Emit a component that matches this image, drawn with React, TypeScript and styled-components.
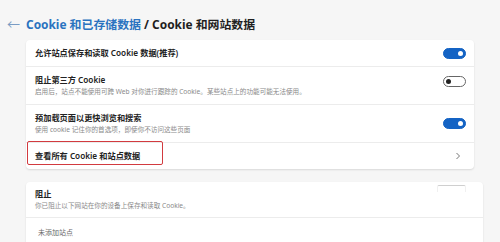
import React from "react";
import styled, { createGlobalStyle } from "styled-components";

const Global = createGlobalStyle`
  html, body { margin: 0; padding: 0; background: #f6f6f6; }
  body {
    font-family: "Noto Sans", "Noto Sans CJK SC", sans-serif;
    color: #1b1b1b;
    width: 500px; height: 242px; overflow: hidden;
  }
`;

const Page = styled.div`
  display: flex;
  flex-direction: column;
  padding: 13px 0 0 0;
`;

const Header = styled.div`
  display: flex;
  align-items: center;
  height: 20px;
  padding-left: 7px;
  gap: 8px;
  font-size: 11.9px;
  font-weight: 700;
  white-space: nowrap;
`;

const Back = styled.span`
  color: #7a9cc4;
  font-size: 13px;
  font-weight: 400;
  width: 11px;
`;

const Crumb = styled.span`
  color: #2a73c0;
`;

const Current = styled.span`
  color: #1f1f1f;
`;

const Card = styled.div<{ $w: number; $top: number }>`
  margin-left: 26px;
  margin-top: ${(p) => p.$top}px;
  width: ${(p) => p.$w}px;
  background: #fff;
  border-radius: 4px;
  box-shadow: 0 1px 2px rgba(0, 0, 0, 0.12);
  display: flex;
  flex-direction: column;
`;

const Row = styled.div<{ $h: number; $last?: boolean }>`
  position: relative;
  height: ${(p) => p.$h}px;
  display: flex;
  align-items: center;
  justify-content: space-between;
  padding: 0 8px 0 9px;
  border-bottom: ${(p) => (p.$last ? "none" : "1px solid #ececec")};
  box-sizing: border-box;
`;

const TextCol = styled.div`
  display: flex;
  flex-direction: column;
  gap: 2px;
  white-space: nowrap;
`;

const Title = styled.div`
  font-size: 8.2px;
  font-weight: 600;
  color: #222;
  line-height: 10px;
`;

const Desc = styled.div`
  font-size: 6.6px;
  color: #8a8a8a;
  line-height: 9px;
`;

const Toggle = styled.div<{ $on: boolean }>`
  width: 23px;
  height: 11px;
  border-radius: 6px;
  box-sizing: border-box;
  background: ${(p) => (p.$on ? "#1463c4" : "#fff")};
  border: 1px solid ${(p) => (p.$on ? "#1463c4" : "#666")};
  display: flex;
  align-items: center;
  justify-content: ${(p) => (p.$on ? "flex-end" : "flex-start")};
  padding: 0 2px;
  align-self: ${(p) => (p.$on ? "center" : "flex-start")};
  margin-top: ${(p) => (p.$on ? "0" : "9px")};
`;

const Knob = styled.div<{ $on: boolean }>`
  width: 5px;
  height: 5px;
  border-radius: 50%;
  background: ${(p) => (p.$on ? "#fff" : "#222")};
`;

const Chevron = styled.svg`
  width: 8px;
  height: 8px;
  margin-right: 4px;
`;

const Highlight = styled.div`
  position: absolute;
  left: 1px;
  top: -2px;
  width: 136px;
  height: 24px;
  border: 1.5px solid #d23a3f;
  border-radius: 2px;
  box-sizing: border-box;
  pointer-events: none;
`;

const AddButton = styled.div`
  position: absolute;
  right: 17px;
  top: 3px;
  width: 27px;
  height: 6px;
  border-top: 1px solid #cfcfcf;
  border-left: 1px solid #f0f0f0;
  border-right: 1px solid #f0f0f0;
  border-radius: 2px 2px 0 0;
  background: #fff;
`;

const Empty = styled.div`
  font-size: 7px;
  color: #6a6a6a;
  padding-left: 3px;
  white-space: nowrap;
`;

export default function App() {
  return (
    <>
      <Global />
      <Page>
        <Header>
          <Back>←</Back>
          <span>
            <Crumb>Cookie 和已存储数据</Crumb>
            <Current> / Cookie 和网站数据</Current>
          </span>
        </Header>
        <Card $w={448} $top={7}>
          <Row $h={27}>
            <Title>允许站点保存和读取 Cookie 数据(推荐)</Title>
            <Toggle $on>
              <Knob $on />
            </Toggle>
          </Row>
          <Row $h={38}>
            <TextCol>
              <Title>阻止第三方 Cookie</Title>
              <Desc>启用后，站点不能使用可跨 Web 对你进行跟踪的 Cookie。某些站点上的功能可能无法使用。</Desc>
            </TextCol>
            <Toggle $on={false}>
              <Knob $on={false} />
            </Toggle>
          </Row>
          <Row $h={38}>
            <TextCol>
              <Title>预加载页面以更快浏览和搜索</Title>
              <Desc>使用 cookie 记住你的首选项，即使你不访问这些页面</Desc>
            </TextCol>
            <Toggle $on>
              <Knob $on />
            </Toggle>
          </Row>
          <Row $h={26} $last>
            <Title>查看所有 Cookie 和站点数据</Title>
            <Highlight />
            <Chevron viewBox="0 0 8 8">
              <path d="M2.5 1 L5.5 4 L2.5 7" fill="none" stroke="#666" strokeWidth="0.9" />
            </Chevron>
          </Row>
        </Card>
        <Card $w={457} $top={13}>
          <Row $h={36}>
            <TextCol>
              <Title>阻止</Title>
              <Desc>你已阻止以下网站在你的设备上保存和读取 Cookie。</Desc>
            </TextCol>
            <AddButton />
          </Row>
          <Row $h={28} $last>
            <Empty>未添加站点</Empty>
          </Row>
        </Card>
      </Page>
    </>
  );
}
